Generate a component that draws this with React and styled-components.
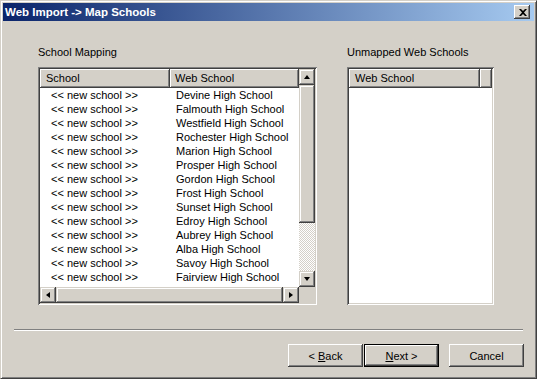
import React from 'react';
import styled, { createGlobalStyle, css } from 'styled-components';

const GlobalStyle = createGlobalStyle`
  html, body {
    margin: 0;
    padding: 0;
    background: #d4d0c8;
  }
  * {
    box-sizing: border-box;
  }
`;

const raised = css`
  background: #d4d0c8;
  box-shadow: inset -1px -1px #404040, inset 1px 1px #ffffff,
    inset -2px -2px #808080, inset 2px 2px #d4d0c8;
`;

const raisedScroll = css`
  background: #d4d0c8;
  box-shadow: inset -1px -1px #404040, inset 1px 1px #d4d0c8,
    inset -2px -2px #808080, inset 2px 2px #ffffff;
`;

const Window = styled.div`
  width: 537px;
  height: 379px;
  padding: 2px;
  display: flex;
  flex-direction: column;
  background: #d4d0c8;
  border: 1px solid;
  border-color: #d4d0c8 #404040 #404040 #d4d0c8;
  box-shadow: inset 1px 1px #ffffff, inset -1px -1px #808080;
  font-family: 'Liberation Sans', Arial, sans-serif;
  font-size: 11px;
  color: #000;
`;

const TitleBar = styled.div`
  height: 18px;
  display: flex;
  align-items: center;
  justify-content: space-between;
  padding: 0 4px 0 2px;
  background: linear-gradient(to right, #0a246a, #a6caf0);
`;

const Title = styled.span`
  color: #fff;
  font-weight: bold;
  font-size: 11.5px;
`;

const CloseButton = styled.div`
  ${raised}
  width: 16px;
  height: 14px;
  display: flex;
  align-items: center;
  justify-content: center;
  padding-left: 1px;
`;

const Body = styled.div`
  flex: 1;
  display: flex;
  flex-direction: column;
`;

const Panels = styled.div`
  display: flex;
  gap: 30px;
  padding: 25px 0 0 35px;
`;

const Column = styled.div`
  width: ${(p) => p.$width}px;
  display: flex;
  flex-direction: column;
`;

const Label = styled.div`
  line-height: 13px;
  margin-bottom: 8px;
`;

const ListBox = styled.div`
  height: 238px;
  padding: 2px;
  background: #fff;
  box-shadow: inset 1px 1px #808080, inset -1px -1px #ffffff,
    inset 2px 2px #404040, inset -2px -2px #d4d0c8;
  display: grid;
  grid-template-columns: ${(p) => (p.$scroll ? '1fr 16px' : '1fr')};
  grid-template-rows: ${(p) => (p.$scroll ? '1fr 16px' : '1fr')};
  overflow: hidden;
`;

const ListArea = styled.div`
  overflow: hidden;
  display: flex;
  flex-direction: column;
`;

const HeaderRow = styled.div`
  display: flex;
  height: 19px;
  flex-shrink: 0;
`;

const HeaderCell = styled.div`
  ${raised}
  width: ${(p) => p.$width}px;
  flex: ${(p) => (p.$grow ? 1 : 'none')};
  padding-left: ${(p) => p.$pad ?? 6}px;
  line-height: 18px;
  white-space: nowrap;
`;

const Row = styled.div`
  display: flex;
  height: 14px;
  line-height: 14px;
  flex-shrink: 0;
  white-space: nowrap;
`;

const Cell = styled.div`
  width: ${(p) => p.$width}px;
  padding-left: ${(p) => p.$pad}px;
  overflow: hidden;
`;

const VScroll = styled.div`
  display: flex;
  flex-direction: column;
`;

const HScroll = styled.div`
  display: flex;
`;

const ScrollButton = styled.div`
  ${raisedScroll}
  width: 16px;
  height: 16px;
  flex-shrink: 0;
  display: flex;
  align-items: center;
  justify-content: center;
`;

const Thumb = styled.div`
  ${raisedScroll}
  flex: ${(p) => (p.$size ? 'none' : 1)};
  height: ${(p) => (p.$vertical && p.$size ? `${p.$size}px` : 'auto')};
`;

const Track = styled.div`
  flex: 1;
  background: repeating-conic-gradient(#ffffff 0 25%, #d4d0c8 0 50%) 0 0 / 2px 2px;
`;

const Corner = styled.div`
  background: #d4d0c8;
`;

const Arrow = styled.div`
  width: 0;
  height: 0;
  border-style: solid;
  ${(p) =>
    p.$dir === 'up' &&
    css`
      border-width: 0 3.5px 4px 3.5px;
      border-color: transparent transparent #000 transparent;
      margin-top: -1px;
    `}
  ${(p) =>
    p.$dir === 'down' &&
    css`
      border-width: 4px 3.5px 0 3.5px;
      border-color: #000 transparent transparent transparent;
    `}
  ${(p) =>
    p.$dir === 'left' &&
    css`
      border-width: 3.5px 4px 3.5px 0;
      border-color: transparent #000 transparent transparent;
      margin-left: -1px;
    `}
  ${(p) =>
    p.$dir === 'right' &&
    css`
      border-width: 3.5px 0 3.5px 4px;
      border-color: transparent transparent transparent #000;
    `}
`;

const Separator = styled.div`
  margin: 24px 11px 0 11px;
  height: 2px;
  border-top: 1px solid #808080;
  border-bottom: 1px solid #ffffff;
`;

const Footer = styled.div`
  display: flex;
  justify-content: flex-end;
  padding: 13px 10px 0 0;
`;

const ButtonGroup = styled.div`
  display: flex;
  gap: 1px;
  margin-right: 10px;
`;

const Button = styled.div`
  width: 75px;
  height: 23px;
  display: flex;
  align-items: center;
  justify-content: center;
  ${(p) =>
    p.$default
      ? css`
          background: #d4d0c8;
          border: 1px solid #000;
          box-shadow: inset -1px -1px #404040, inset 1px 1px #ffffff,
            inset -2px -2px #808080;
        `
      : raised}
  u {
    text-decoration: underline;
    text-underline-offset: 1px;
  }
`;

const mappings = [
  'Devine High School',
  'Falmouth High School',
  'Westfield High School',
  'Rochester High School',
  'Marion High School',
  'Prosper High School',
  'Gordon High School',
  'Frost High School',
  'Sunset High School',
  'Edroy High School',
  'Aubrey High School',
  'Alba High School',
  'Savoy High School',
  'Fairview High School',
  'Bellville High School',
];

const CloseIcon = () => (
  <svg width="8" height="7" viewBox="0 0 8 7">
    <path d="M0 0h2l2 2 2-2h2L5 3.5 8 7H6L4 5 2 7H0l3-3.5z" fill="#000" />
  </svg>
);

const App = () => (
  <>
    <GlobalStyle />
    <Window>
      <TitleBar>
        <Title>Web Import -&gt; Map Schools</Title>
        <CloseButton>
          <CloseIcon />
        </CloseButton>
      </TitleBar>
      <Body>
        <Panels>
          <Column $width={279}>
            <Label>School Mapping</Label>
            <ListBox $scroll>
              <ListArea>
                <HeaderRow>
                  <HeaderCell $width={130}>School</HeaderCell>
                  <HeaderCell $width={129} $pad={5}>
                    Web School
                  </HeaderCell>
                </HeaderRow>
                {mappings.map((name) => (
                  <Row key={name}>
                    <Cell $width={130} $pad={11}>
                      &lt;&lt; new school &gt;&gt;
                    </Cell>
                    <Cell $width={129} $pad={6}>
                      {name}
                    </Cell>
                  </Row>
                ))}
              </ListArea>
              <VScroll>
                <ScrollButton>
                  <Arrow $dir="up" />
                </ScrollButton>
                <Thumb $vertical $size={138} />
                <Track />
                <ScrollButton>
                  <Arrow $dir="down" />
                </ScrollButton>
              </VScroll>
              <HScroll>
                <ScrollButton>
                  <Arrow $dir="left" />
                </ScrollButton>
                <Thumb />
                <ScrollButton>
                  <Arrow $dir="right" />
                </ScrollButton>
              </HScroll>
              <Corner />
            </ListBox>
          </Column>
          <Column $width={147}>
            <Label>Unmapped Web Schools</Label>
            <ListBox>
              <ListArea>
                <HeaderRow>
                  <HeaderCell $width={131}>Web School</HeaderCell>
                  <HeaderCell $grow />
                </HeaderRow>
              </ListArea>
            </ListBox>
          </Column>
        </Panels>
        <Separator />
        <Footer>
          <ButtonGroup>
            <Button>
              &lt;&nbsp;<u>B</u>ack
            </Button>
            <Button $default>
              <u>N</u>ext &gt;
            </Button>
          </ButtonGroup>
          <Button>Cancel</Button>
        </Footer>
      </Body>
    </Window>
  </>
);

export default App;
